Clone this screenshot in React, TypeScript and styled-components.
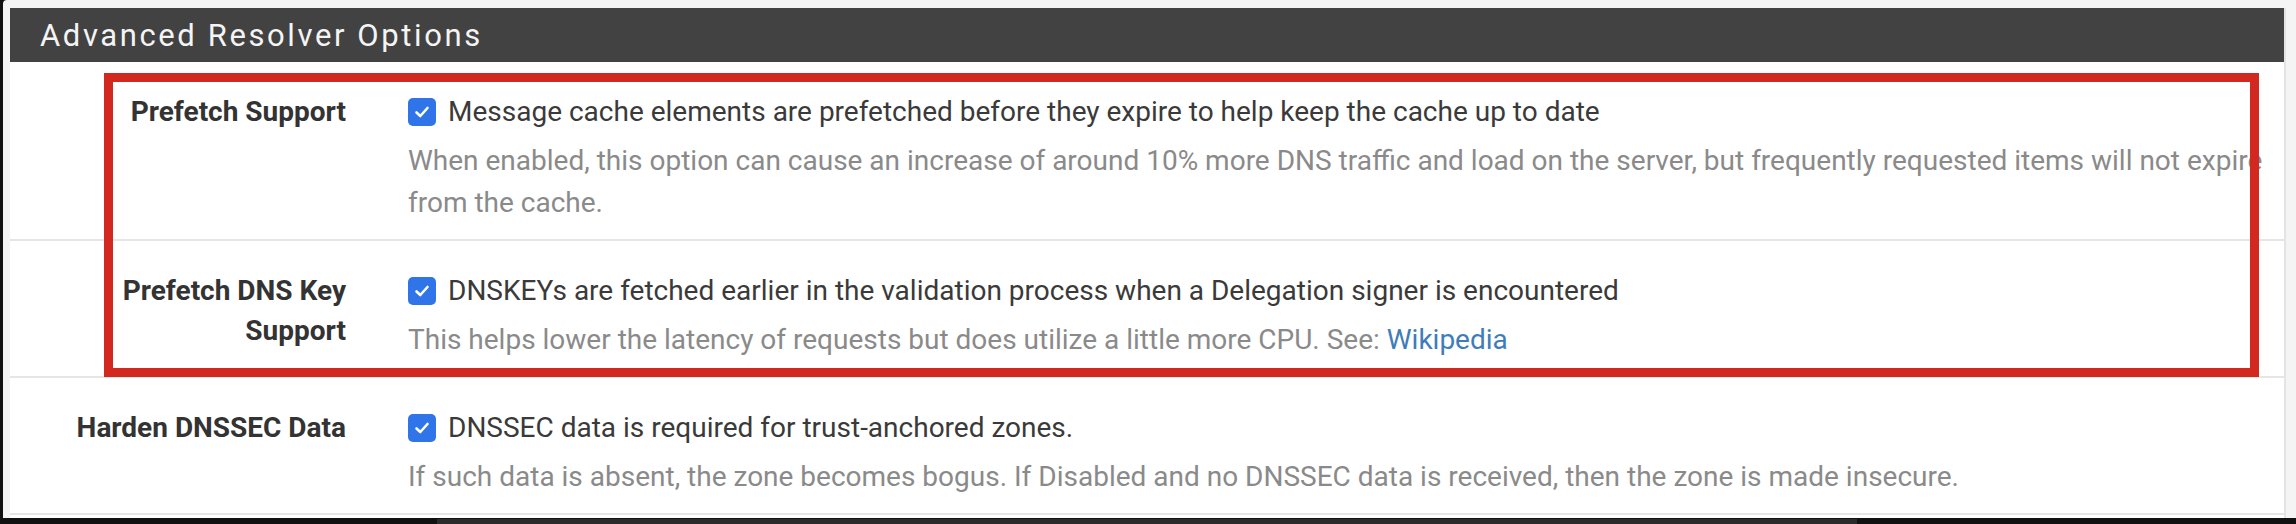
import * as React from 'react';
import styled, { createGlobalStyle } from 'styled-components';

const GlobalStyle = createGlobalStyle`
  html, body {
    margin: 0;
    padding: 0;
    background: #111111;
  }
  body {
    font-family: Roboto, "Liberation Sans", Arial, sans-serif;
  }
`;

const Screen = styled.div`
  position: relative;
  width: 2296px;
  height: 524px;
  display: flex;
  flex-direction: column;
  background: #111111;
  overflow: hidden;
`;

const Viewport = styled.div`
  height: 518px;
  margin-left: 3px;
  padding: 8px 10px 0 7px;
  box-sizing: border-box;
  background: #f4f4f4;
  border-top-left-radius: 4px;
`;

const Panel = styled.section`
  background: #ffffff;
  height: 100%;
  border-right: 2px solid #e4e4e4;
  box-sizing: border-box;
`;

const PanelHeading = styled.div`
  height: 54px;
  display: flex;
  align-items: center;
  padding-left: 30px;
  background: #424242;
`;

const PanelTitle = styled.h2`
  margin: 0;
  font-size: 31px;
  font-weight: 400;
  letter-spacing: 2.6px;
  color: #f4f4f4;
`;

const FormRow = styled.div`
  display: grid;
  grid-template-columns: 366px 1fr;
  padding: 30px 0 15px;
  border-bottom: 2px solid #e6e6e6;
`;

const RowLabel = styled.div`
  padding: 0 30px 0 40px;
  text-align: right;
  font-size: 28px;
  font-weight: 700;
  line-height: 40px;
  color: #333333;
`;

const RowValue = styled.div`
  padding: 0 4px 0 32px;
`;

const CheckLine = styled.label`
  display: flex;
  align-items: center;
  gap: 12px;
  font-size: 28px;
  line-height: 40px;
  color: #3a3a3a;
`;

const CheckBox = styled.span`
  flex-shrink: 0;
  width: 28px;
  height: 28px;
  border-radius: 5px;
  background: #2f74e8;
  display: flex;
  align-items: center;
  justify-content: center;
`;

const HelpBlock = styled.p`
  margin: 8px 0 0;
  font-size: 28px;
  line-height: 42px;
  color: #8a8a8a;
`;

const HelpLink = styled.a`
  color: #3f7dba;
  text-decoration: none;
`;

const ScrollTrack = styled.div`
  flex: 1;
  display: flex;
  align-items: stretch;
  padding-top: 1px;
`;

const ScrollThumb = styled.div<{ $left: number; $width: number }>`
  margin-left: ${(p) => p.$left}px;
  width: ${(p) => p.$width}px;
  background: #2b2b2b;
`;

const Highlight = styled.div`
  position: absolute;
  left: 104px;
  top: 73px;
  width: 2155px;
  height: 304px;
  box-sizing: border-box;
  border: 9px solid #d3281f;
  pointer-events: none;
`;

const Tick = () => (
  <svg width="18" height="18" viewBox="0 0 18 18" fill="none">
    <path
      d="M3.5 9.5 L7.3 13 L14.5 5"
      stroke="#ffffff"
      strokeWidth="2.6"
      strokeLinecap="round"
      strokeLinejoin="round"
    />
  </svg>
);

interface OptionRowProps {
  label: React.ReactNode;
  text: string;
  help: React.ReactNode;
}

const OptionRow = ({ label, text, help }: OptionRowProps) => (
  <FormRow>
    <RowLabel>{label}</RowLabel>
    <RowValue>
      <CheckLine>
        <CheckBox>
          <Tick />
        </CheckBox>
        {text}
      </CheckLine>
      <HelpBlock>{help}</HelpBlock>
    </RowValue>
  </FormRow>
);

const App = () => (
  <>
    <GlobalStyle />
    <Screen>
      <Viewport>
        <Panel>
          <PanelHeading>
            <PanelTitle>Advanced Resolver Options</PanelTitle>
          </PanelHeading>
          <OptionRow
            label="Prefetch Support"
            text="Message cache elements are prefetched before they expire to help keep the cache up to date"
            help="When enabled, this option can cause an increase of around 10% more DNS traffic and load on the server, but frequently requested items will not expire from the cache."
          />
          <OptionRow
            label="Prefetch DNS Key Support"
            text="DNSKEYs are fetched earlier in the validation process when a Delegation signer is encountered"
            help={
              <>
                This helps lower the latency of requests but does utilize a little more CPU. See:{' '}
                <HelpLink href="#">Wikipedia</HelpLink>
              </>
            }
          />
          <OptionRow
            label="Harden DNSSEC Data"
            text="DNSSEC data is required for trust-anchored zones."
            help="If such data is absent, the zone becomes bogus. If Disabled and no DNSSEC data is received, then the zone is made insecure."
          />
        </Panel>
      </Viewport>
      <ScrollTrack>
        <ScrollThumb $left={437} $width={1420} />
      </ScrollTrack>
      <Highlight />
    </Screen>
  </>
);

export default App;
